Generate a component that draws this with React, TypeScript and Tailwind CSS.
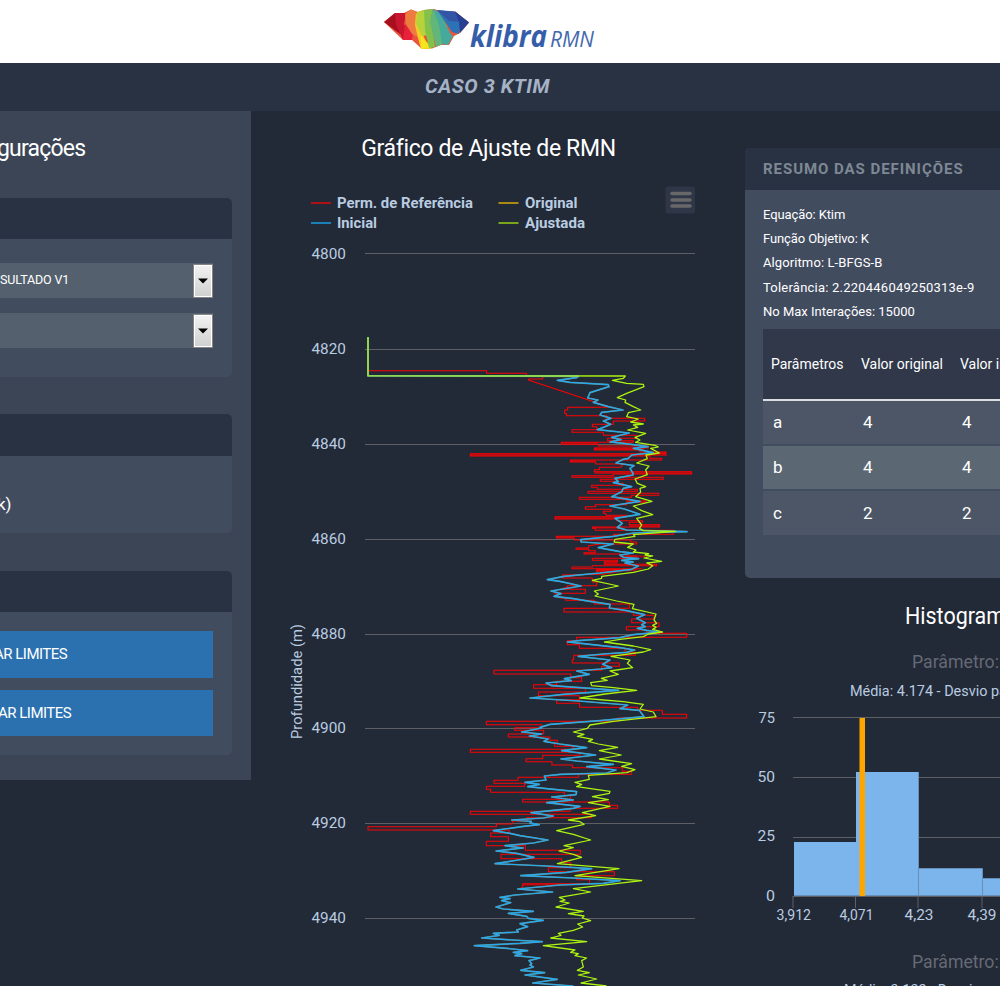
import React from 'react';

type Segment = [offset: number, points: string];

/* Series coordinates are in thirds of a pixel; every segment carries its own vertical offset. */
const RED: Segment[] = [
  [0, '24,22 24,122 380,122 380,130 499,130 499,138 548,138 548,147 505,147 505,150 697,214 745,232 623,232 623,240 614,240 614,250 619,250 619,257 740,257 740,265 854,265 854,273 760,273 760,283 697,283 697,290 710,290 710,299 636,299 636,307 730,307 730,316 830,316 830,325 743,325 743,332 820,332 820,337 604,337 604,343 715,343 715,348 865,348 865,354 703,354 703,360 840,360 840,366 918,366 918,371 331,371 331,378 870,378 870,385 905,385 905,390 631,390 631,396 707,396 707,402 790,402 782,412 718,412 718,419 703,419 703,425 995,425 995,432 760,432 760,437 636,437 636,442'],
  [420, '910,22 910,28 721,28 721,34 770,34 770,40 790,40 790,46 695,46 695,52 712,52 712,58 832,58 832,64 684,64 684,70 896,70 896,76 815,76 815,82 658,82 658,88 800,88 800,93 858,93 858,97 800,97 800,104 706,104 706,110 676,110 676,118 753,118 753,124 730,124 730,130 738,130 738,136 800,136 800,140 585,140 585,147 770,147 770,152 848,152 848,157 808,157 808,164 899,164 899,171 697,171 697,175 706,175 706,181 941,181 941,193 760,193 760,199 589,199 589,204 643,204 643,210 812,210 812,216 830,216 830,222 720,222 686,227 686,234 648,234 648,238 686,238 686,242 706,242 706,248 672,248 672,252 780,252 780,258 830,258 830,265 697,265 697,271 773,271 773,275 733,275 733,283 890,283 890,287 697,287 697,291 636,291 636,296 845,296 709,300 709,304 780,304 730,313 607,315 607,324 697,324 697,336 710,336 710,347 622,347 622,352 600,358 676,358 676,370 585,370 600,384 617,384 617,391 703,391 703,402 808,402 808,415 612,415 612,426 820,426 820,436'],
  [810, '820,46 882,46 882,57 815,57 815,68 897,68 897,80 799,80 799,90 860,90 860,100 980,100 980,112 650,112 650,122 622,122 622,134 658,134 658,145 795,145 795,157 826,157 826,166 641,166 641,179 637,179 637,189 778,189 778,199 725,199 725,211 402,211 402,222 632,222 632,233 665,233 665,244 590,244 590,254 521,254 521,265 677,265 677,276 535,276 535,287 658,287 658,299 590,299 590,310 659,310 659,322 833,322 833,331 907,331 907,343 980,343 980,354 773,354 773,364 379,364 379,374 545,374 545,383 464,383 464,391 551,391 551,402 445,402 445,411'],
  [1170, '570,51 570,61 592,61 592,70 584,70 584,79 640,79 640,88 331,88 331,97 660,97 660,106 548,106 548,116 498,116 498,125 576,125 576,135 637,135 637,143 787,143 787,154 815,154 815,163 655,163 655,172 474,172 474,181 402,181 402,190 494,190 494,199 379,199 379,208 392,208 392,217 613,217 613,227 632,227 632,238 488,238 488,246 748,246 748,256 773,256 773,265 630,265 630,274 331,274 331,283 695,283 695,293 500,293 500,303 457,303 457,312 409,312 409,320 24,320 24,330 447,330 447,339 392,339 392,350 445,350 445,364 379,364 379,377 496,377 496,391'],
  [1548, '661,13 661,25 423,25 423,38 605,38 605,50 632,50 632,65 565,65 565,77 763,77 763,89 650,89 650,101 689,101 689,113 488,113 488,124 478,128'],
];

const BLUE: Segment[] = [
  [0, '24,22 24,137 655,139 650,143 592,151 630,157 745,164 747,170 690,188 683,204 714,210 700,217 745,230 789,240 725,247 720,255 753,265 730,273 752,283 735,290 712,299 808,309 755,322 783,329 750,336 790,340 864,350 820,355 880,368 815,375 805,385 790,388 768,399 822,407 810,415 819,430'],
  [420, '819,15 765,25 775,35 760,38 815,50 790,55 785,65 755,80 840,94 750,108 793,117 840,133 765,145 787,160 772,172 800,180 981,185 820,189 760,199 662,209 664,216 760,222 715,233 780,245 820,249 780,255 790,262 836,266 785,271 820,276 795,279 835,288 815,298 720,309 612,319 562,329 600,334 663,348 573,363 603,371 582,379 640,386 690,394 750,403 748,414 800,422'],
  [810, '854,44 830,55 856,68 845,74 856,80 832,85 860,91 900,96 820,104 780,113 655,122 622,126 670,131 780,143 824,150 800,157 730,162 655,169 750,180 728,193 755,203 722,207 650,213 688,223 613,236 634,242 558,249 575,257 776,271 610,283 510,294 655,303 803,315 780,326 838,331 852,350 720,362 570,373 540,382'],
  [1170, '545,24 485,36 545,42 508,48 565,57 552,64 600,72 680,83 605,92 707,105 603,117 650,123 760,133 680,140 768,150 740,159 600,163 553,168 558,180 495,187 538,193 503,200 560,206 650,215 648,224 575,231 640,240 560,248 660,259 640,265 513,278 580,288 550,294 455,300 514,304 510,309 538,314 490,319 400,332 450,340 480,347 564,360 520,369 435,377 490,384'],
  [1548, '408,15 470,22 522,34 475,42 405,53 560,60 695,68 620,79 482,89 640,96 780,104 730,112 600,117 473,129 578,138 465,147 420,154 450,158 425,164 452,170 408,183 430,189 520,196 445,202 500,211 505,217 550,223 480,233 503,242 470,252 475,258 400,262 418,268 365,276 440,281 547,287 480,292 343,299 440,307 503,314 460,319 485,323 465,329 540,336 507,344 515,353 510,357 520,363 482,373 554,380 495,387 592,400 518,411 640,420'],
];

const GREEN: Segment[] = [
  [0, '24,22 24,137 796,138 790,145 757,151 800,160 850,163 852,170 800,190 772,203 797,210 795,217 820,230 842,240 805,248 800,260 835,267 812,276 850,282 820,285 833,292 803,300 857,310 825,322 840,330 827,337 885,346 895,351 872,355 898,369 858,375 862,386 830,399 867,408 857,420 862,434'],
  [420, '825,27 832,40 857,50 840,55 842,66 827,80 876,94 820,108 845,122 878,134 830,145 845,165 838,175 850,182 947,184 820,194 825,199 765,208 762,216 820,222 803,232 828,240 820,246 866,251 855,255 878,258 852,264 905,274 860,279 878,287 865,297 820,307 725,319 725,325 697,331 775,348 703,363 715,372 705,378 770,393 822,403 817,416'],
  [810, '888,42 882,60 890,70 878,76 888,82 878,88 908,96 865,102 850,110 780,118 733,126 820,138 872,149 850,156 753,169 810,180 802,190 818,203 750,213 775,223 724,235 742,241 692,248 695,257 760,263 830,271 735,282 660,294 790,305 850,313 840,327 880,336 888,350 760,364 690,375 682,385'],
  [1170, '640,36 672,43 652,49 698,58 685,64 715,72 773,82 718,92 784,105 718,117 815,131 785,139 825,149 800,158 685,166 688,178 645,187 665,193 650,200 750,214 748,220 697,230 745,239 685,248 750,259 667,278 707,287 625,300 660,305 672,313 590,332 640,343 692,360 612,377 640,383'],
  [1548, '597,15 640,25 665,34 592,53 777,68 645,89 845,104 640,128 692,138 633,148 598,154 615,162 600,166 628,171 588,183 670,196 625,203 672,210 667,216 692,224 653,234 668,243 640,253 595,262 603,268 572,276 680,287 550,299 645,312 632,319 655,323 645,329 680,336 665,344 670,363 652,373 688,380 655,387 710,399 663,411 740,420'],
];

const DENSE = [
  [331, 371, 590, 7], [865, 366, 53, 6], [703, 425, 292, 7], [631, 390, 76, 6], [703, 353, 150, 7], [604, 337, 110, 6],
  [585, 560, 190, 7], [589, 619, 54, 5], [808, 584, 91, 7], [697, 591, 90, 5], [733, 695, 40, 8], [709, 716, 120, 8],
  [612, 835, 60, 2], [488, 1661, 110, 6], [800, 676, 60, 6],
];

const join = (segments: Segment[]) =>
  segments
    .flatMap(([offset, points]) =>
      points.split(' ').map((pair) => {
        const [x, y] = pair.split(',').map(Number);
        return `${x},${y + offset}`;
      }),
    )
    .join(' ');

const DEPTHS: [string, number, number][] = [
  ['4800', 253.5, 259], ['4820', 349.5, 354], ['4840', 444.5, 449], ['4860', 539.5, 543.5],
  ['4880', 634.5, 638.5], ['4900', 728.5, 733], ['4920', 823.5, 828], ['4940', 918.5, 923],
];

function Label({ x, y, w, size = 14, fill = '#b9cce0', bold = false, children }: {
  x: number; y: number; w: number; size?: number; fill?: string; bold?: boolean; children: string;
}) {
  return (
    <text x={x} y={y} textLength={w} lengthAdjust="spacingAndGlyphs" fontSize={size} fill={fill} fontWeight={bold ? 700 : 400}>
      {children}
    </text>
  );
}

function Logo() {
  return (
    <svg className="block" width="212" height="55" viewBox="384 5 212 55" role="img">
      <polygon points="384,22 395,13 404,13 411,9.5 418,12 424,10 434,9 443,12 455,11.5 469,22.5 460,33 454,36 449,45 441,45 432,48.5 422,49 412,40 403,40" fill="#e9563b" />
      <polygon points="384,22 395,13 398,20 400,34" fill="#a80f1e" />
      <polygon points="395,13 406,13 404,24 412,40 403,40 396,25" fill="#c8162f" />
      <polygon points="405,24 413,34 412,40 403,40" fill="#e9203b" />
      <polygon points="405,14 411,9.5 417,12 416,25 420,38 412,34 406,24" fill="#ee7b40" />
      <polygon points="416,12 420,26 428,48 421,49 418,38 415,25" fill="#f5cb25" />
      <polygon points="421,35 432,48.5 421,49" fill="#f5e41e" />
      <polygon points="417,12 424,10 431,18 429,35 422,36 416,24" fill="#b8d23c" />
      <polygon points="424,10 433,9 431,18 435,47 429,48 425,30" fill="#82c14c" />
      <polygon points="433,9 440,14 447,26 443,44 436,47 430,22" fill="#62b67a" />
      <polygon points="433,9 440,13 450,33 453,36 448,45 442,44 439,25" fill="#45aa9b" />
      <polygon points="437,10 454,12 461,22 459,34 452,32" fill="#2c72b6" />
      <polygon points="437,10 455,11.5 469,22.5 449,21" fill="#3455a5" />
      <polygon points="455,11.5 469,22.5 460,33 459,22" fill="#293f91" />
      <text x="470" y="46.500" textLength="77" lengthAdjust="spacingAndGlyphs" fontSize="31" fontStyle="italic" fontWeight="700" fontFamily="'Open Sans', sans-serif" fill="#355da9">klibra</text>
      <text x="550" y="46.500" textLength="44" lengthAdjust="spacingAndGlyphs" fontSize="22.500" fontStyle="italic" fontWeight="400" fontFamily="'Open Sans', sans-serif" fill="#4468ad">RMN</text>
    </svg>
  );
}

function SelectBox({ label = '' }: { label?: string }) {
  return (
    <div className="flex h-[35px] items-center justify-between bg-[#55606e]">
      <span className="text-[12.5px] tracking-[-0.15px] text-white">{label}</span>
      <span className="flex h-[34px] w-5 items-center justify-center border border-[#858383] bg-gradient-to-b from-[#f3f3f3] to-[#cfcfcf] shadow-[inset_0_0_0_1px_#ffffff]">
        <svg width="10" height="6" viewBox="0 0 10 6"><path d="M0 0.5h10L5 5.5z" fill="#000" /></svg>
      </span>
    </div>
  );
}

function Sidebar() {
  return (
    <aside className="h-[669px] w-[251px] shrink-0 overflow-hidden bg-[#3b4556] pr-[19px]">
      <h2 className="flex h-[87px] items-center pb-3 text-[23px] leading-none font-normal whitespace-nowrap text-white">
        <span className="-ml-[3px] tracking-[-0.8px]">gurações</span>
      </h2>
      <section className="h-[179px] overflow-hidden rounded-r-[5px] bg-[#424c5f]">
        <div className="h-[41px] bg-[#293243]" />
        <div className="flex flex-col gap-[15px] pt-6 pr-[19px]">
          <SelectBox label="SULTADO V1" />
          <SelectBox />
        </div>
      </section>
      <section className="mt-[37px] h-[119px] overflow-hidden rounded-r-[5px] bg-[#424c5f]">
        <div className="h-[42px] bg-[#293243]" />
        <div className="pt-[36px] text-[17px] leading-6 text-white"><span className="-ml-[3px]">k)</span></div>
      </section>
      <section className="mt-[38px] h-[184px] overflow-hidden rounded-r-[5px] bg-[#424c5f]">
        <div className="h-[41px] bg-[#293243]" />
        <div className="flex flex-col gap-3 pt-[19px] pr-[19px] text-[15px] text-white">
          <button className="flex h-[47px] items-center bg-[#2b71b0]"><span className="-ml-[6px] tracking-[-0.5px] whitespace-nowrap">AR LIMITES</span></button>
          <button className="flex h-[46px] items-center bg-[#2b71b0]"><span className="-ml-[2px] tracking-[-0.5px] whitespace-nowrap">AR LIMITES</span></button>
        </div>
      </section>
    </aside>
  );
}

function AdjustChart() {
  const blue = join(BLUE);
  return (
    <main className="w-[494px] shrink-0">
      <h2 className="flex h-[69px] items-center justify-center pt-[7px] pr-[19px] text-[23px] font-normal tracking-[-0.35px] whitespace-nowrap text-white">
        Gráfico de Ajuste de RMN
      </h2>
      <svg className="block" width="494" height="806" viewBox="251 180 494 806">
        <g strokeWidth="2">
          <path d="M311 203h20" stroke="#b01116" />
          <path d="M311 223h20" stroke="#1c80b8" />
          <path d="M498.500 203h20" stroke="#aa8a12" />
          <path d="M498.500 223h20" stroke="#78a51b" />
        </g>
        <Label x={337} y={208} w={136} size={15} bold>Perm. de Referência</Label>
        <Label x={337} y={228} w={40} size={15} bold>Inicial</Label>
        <Label x={525} y={208} w={52.500} size={15} bold>Original</Label>
        <Label x={525} y={228} w={60} size={15} bold>Ajustada</Label>
        <rect x="665.500" y="186.500" width="29.500" height="27" rx="2" fill="#2e3648" />
        <path d="M672 193.500h18M672 200h18M672 206h18" stroke="#686868" strokeWidth="3.500" strokeLinecap="round" />
        {DEPTHS.map(([depth, y, baseline]) => (
          <g key={depth}>
            <path d={`M365 ${y}H695`} stroke="#606064" />
            <Label x={311.500} y={baseline} w={34.500}>{depth}</Label>
          </g>
        ))}
        <text transform="translate(301.500 739) rotate(-90)" textLength="115" lengthAdjust="spacingAndGlyphs" fontSize="14" fill="#b9cce0">Profundidade (m)</text>
        <g transform="translate(360 330) scale(0.333333)" fill="none" strokeLinejoin="round">
          {DENSE.map(([x, y, width, height]) => (
            <rect key={`${x}-${y}`} x={x} y={y} width={width} height={height} fill="#a01119" />
          ))}
          <polyline points={join(RED)} stroke="#ff0202" strokeWidth="3.200" />
          <polyline points={blue} stroke="#628e82" strokeWidth="5" />
          <polyline points={blue} stroke="#27aaf2" strokeWidth="3.600" />
          <polyline points={join(GREEN)} stroke="#adf510" strokeWidth="3.800" />
          <polyline points="24,22 24,137 655,138" stroke="#8fd650" strokeWidth="5.500" />
        </g>
      </svg>
    </main>
  );
}

const FACTS: [string, string][] = [
  ['Equação: Ktim', 'tracking-[-0.1px]'],
  ['Função Objetivo: K', 'tracking-[-0.1px]'],
  ['Algoritmo: L-BFGS-B', 'tracking-[0.1px]'],
  ['Tolerância: 2.220446049250313e-9', 'tracking-[0.22px]'],
  ['No Max Interações: 15000', 'tracking-normal'],
];

const ROWS: [string, string, string, string][] = [
  ['a', '4', '4', 'h-[43px] bg-[#4d5666]'],
  ['b', '4', '4', 'h-[43px] bg-[#5c6774]'],
  ['c', '2', '2', 'h-11 bg-[#4d5666] pt-0.5'],
];

function Summary() {
  return (
    <section className="mt-[37px] h-[430px] overflow-hidden rounded-l-[5px] bg-[#424c5f]">
      <h3 className="flex h-[42px] items-center bg-[#293243] pl-[18px] text-[15px] font-bold tracking-[0.95px] whitespace-nowrap text-[#7e8894]">
        RESUMO DAS DEFINIÇÕES
      </h3>
      <ul className="h-[139px] pt-[13px] pl-[18px] text-[13px] leading-[24.2px] whitespace-nowrap text-white">
        {FACTS.map(([fact, tracking]) => <li key={fact} className={tracking}>{fact}</li>)}
      </ul>
      <div className="ml-[18px] flex flex-col gap-0.5 text-white">
        <div className="grid h-[72px] grid-cols-[90px_99px_100px] items-center border-b-2 border-[#dcdce2] bg-[#30384a] pl-[8px] text-[14px] whitespace-nowrap">
          <span>Parâmetros</span>
          <span>Valor original</span>
          <span>Valor inicial</span>
        </div>
        <div className="-mt-0.5 flex flex-col gap-0.5 text-[17px]">
          {ROWS.map(([name, original, initial, tone]) => (
            <div key={name} className={`grid grid-cols-[90px_99px_100px] items-center pl-[10px] ${tone}`}>
              <span>{name}</span>
              <span>{original}</span>
              <span>{initial}</span>
            </div>
          ))}
        </div>
      </div>
    </section>
  );
}

function Histogram() {
  return (
    <svg className="block" width="255" height="408" viewBox="745 578 255 408">
      <Label x={905} y={624} w={235} size={23} fill="#ffffff">Histograma da Incerteza</Label>
      <Label x={912} y={668} w={101} size={18} fill="#666a75">Parâmetro: a</Label>
      <Label x={850} y={696} w={229} size={14}>Média: 4.174 - Desvio padrão: 0.255</Label>
      <path d="M793 717.500H1000M793 777.500H1000M793 837.500H1000M793 896.500H1000" stroke="#606064" />
      <path d="M793 896v12M855.500 896v12M918 896v12M982 896v12" stroke="#606064" />
      <g fill="#7cb5ec">
        <rect x="794" y="842" width="62" height="54" />
        <rect x="856" y="772" width="62.500" height="124" />
        <rect x="918.500" y="868" width="63.500" height="28" />
        <rect x="982.500" y="878" width="18" height="18" />
      </g>
      <path d="M794 895.500H1000M918.500 772v124M918.500 868.500H982.500V896M982.500 878.500H1000" fill="none" stroke="#6590bb" />
      <rect x="859.500" y="718" width="5.500" height="178" fill="#ffa500" />
      <Label x={758.500} y={723} w={16.500}>75</Label>
      <Label x={757.500} y={782} w={17.500}>50</Label>
      <Label x={757.500} y={841} w={17.500}>25</Label>
      <Label x={766} y={901} w={9}>0</Label>
      <Label x={776.500} y={920} w={34.500}>3,912</Label>
      <Label x={839.500} y={920} w={34}>4,071</Label>
      <Label x={904.500} y={920} w={29}>4,23</Label>
      <Label x={967.500} y={920} w={29}>4,39</Label>
      <Label x={912} y={968} w={101} size={18} fill="#666a75">Parâmetro: b</Label>
      <Label x={844} y={995} w={236} size={14}>Média: 3.132 - Desvio padrão: 0.2551</Label>
    </svg>
  );
}

export default function App() {
  return (
    <div className="h-[986px] w-[1000px] overflow-hidden bg-[#222937] font-['Roboto','Open_Sans',sans-serif]">
      <header className="flex h-[63px] justify-center bg-white pt-[5px] pr-[20px]">
        <Logo />
      </header>
      <div className="flex h-12 items-center justify-center bg-[#293243] pr-[25px] pb-0.5 text-[20px] font-bold tracking-[0.55px] text-[#a6b3c6] italic">
        CASO 3 KTIM
      </div>
      <div className="flex h-[875px] items-start overflow-hidden">
        <Sidebar />
        <AdjustChart />
        <aside className="w-[255px] shrink-0 overflow-hidden">
          <Summary />
          <Histogram />
        </aside>
      </div>
    </div>
  );
}
